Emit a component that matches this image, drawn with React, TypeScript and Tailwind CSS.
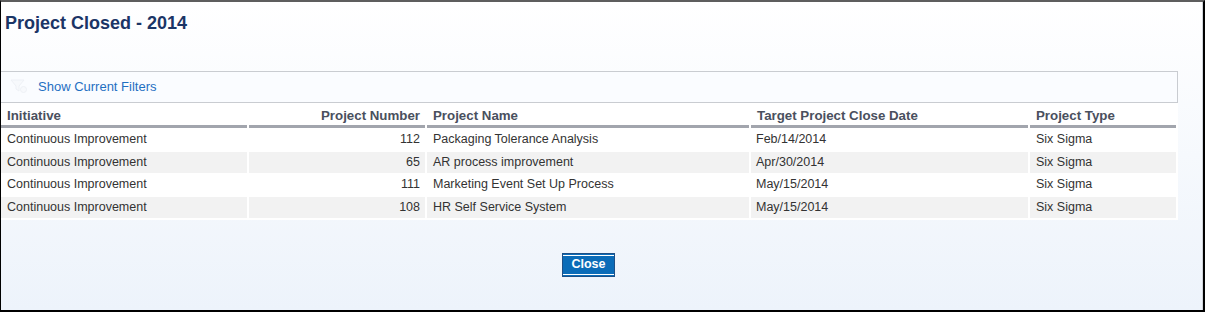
import React from "react";

const rows = [
  ["Continuous Improvement", "112", "Packaging Tolerance Analysis", "Feb/14/2014", "Six Sigma"],
  ["Continuous Improvement", "65", "AR process improvement", "Apr/30/2014", "Six Sigma"],
  ["Continuous Improvement", "111", "Marketing Event Set Up Process", "May/15/2014", "Six Sigma"],
  ["Continuous Improvement", "108", "HR Self Service System", "May/15/2014", "Six Sigma"],
];

const headers = ["Initiative", "Project Number", "Project Name", "Target Project Close Date", "Project Type"];

export default function App() {
  return (
    <div className="w-[1205px] h-[312px] overflow-hidden border-l border-l-black border-r-2 border-r-black border-b-2 border-b-black border-t-2 border-t-[#5e5e5e] bg-gradient-to-b from-white to-[#edf3fb] font-['Liberation_Sans',Arial,sans-serif]">
      <div className="flex h-full">
        <div className="w-[1177px] flex flex-col">
          <h1 className="pl-[4px] pt-[11px] h-[69px] text-[18px] leading-[21px] font-bold text-[#1b3566]">
            Project Closed - 2014
          </h1>
          <div className="h-[32px] border-y border-[#c9ccd1] border-r bg-[#fafcff] flex items-center">
            <svg width="18" height="16" viewBox="0 0 18 16" className="ml-[9px] -mt-[2px]">
              <path d="M1 2 H14 L9 8 V13 L6 11 V8 Z" fill="#f7f9fc" stroke="#eef1f6" strokeWidth="1" />
              <circle cx="13.5" cy="11.5" r="3" fill="#f7f9fc" stroke="#eef1f6" />
            </svg>
            <span className="ml-[10px] -mt-[1px] text-[13px] text-[#1f6fc2]">Show Current Filters</span>
          </div>
          <div className="bg-white pt-[2px] pb-[2px] grid grid-cols-[246px_176px_322px_277px_146px] gap-x-[2px] gap-y-[2px] w-[1177px]">
            {headers.map((h, i) => (
              <div
                key={h}
                className={`h-[22.5px] pt-[2px] border-b-[3px] border-[#a2a5ad] text-[13.3px] font-bold text-[#4a505e] flex items-center ${
                  i === 1 ? "justify-end pr-[5px]" : "pl-[6px]"
                }`}
              >
                {h}
              </div>
            ))}
            {rows.map((r, ri) =>
              r.map((c, ci) => (
                <div
                  key={`${ri}-${ci}`}
                  className={`h-[20.5px] text-[12.5px] text-[#333333] flex items-center ${
                    ri % 2 === 1 ? "bg-[#f2f2f2]" : "bg-white"
                  } ${ci === 1 ? "justify-end pr-[5px]" : ci === 3 ? "pl-[5px]" : "pl-[6px]"}`}
                >
                  {c}
                </div>
              ))
            )}
          </div>
          <div className="flex justify-center mt-[33px] pr-[2px]">
            <button className="w-[53px] h-[24px] border border-[#1d4f86] bg-[#0b6cb8] py-[1px] flex">
              <span className="flex-1 border-y border-white flex items-center justify-center text-white font-bold text-[12.5px] leading-none">
                Close
              </span>
            </button>
          </div>
        </div>
        <div className="flex-1" />
        <div className="w-[1px] bg-[#d0d4da]" />
      </div>
    </div>
  );
}
